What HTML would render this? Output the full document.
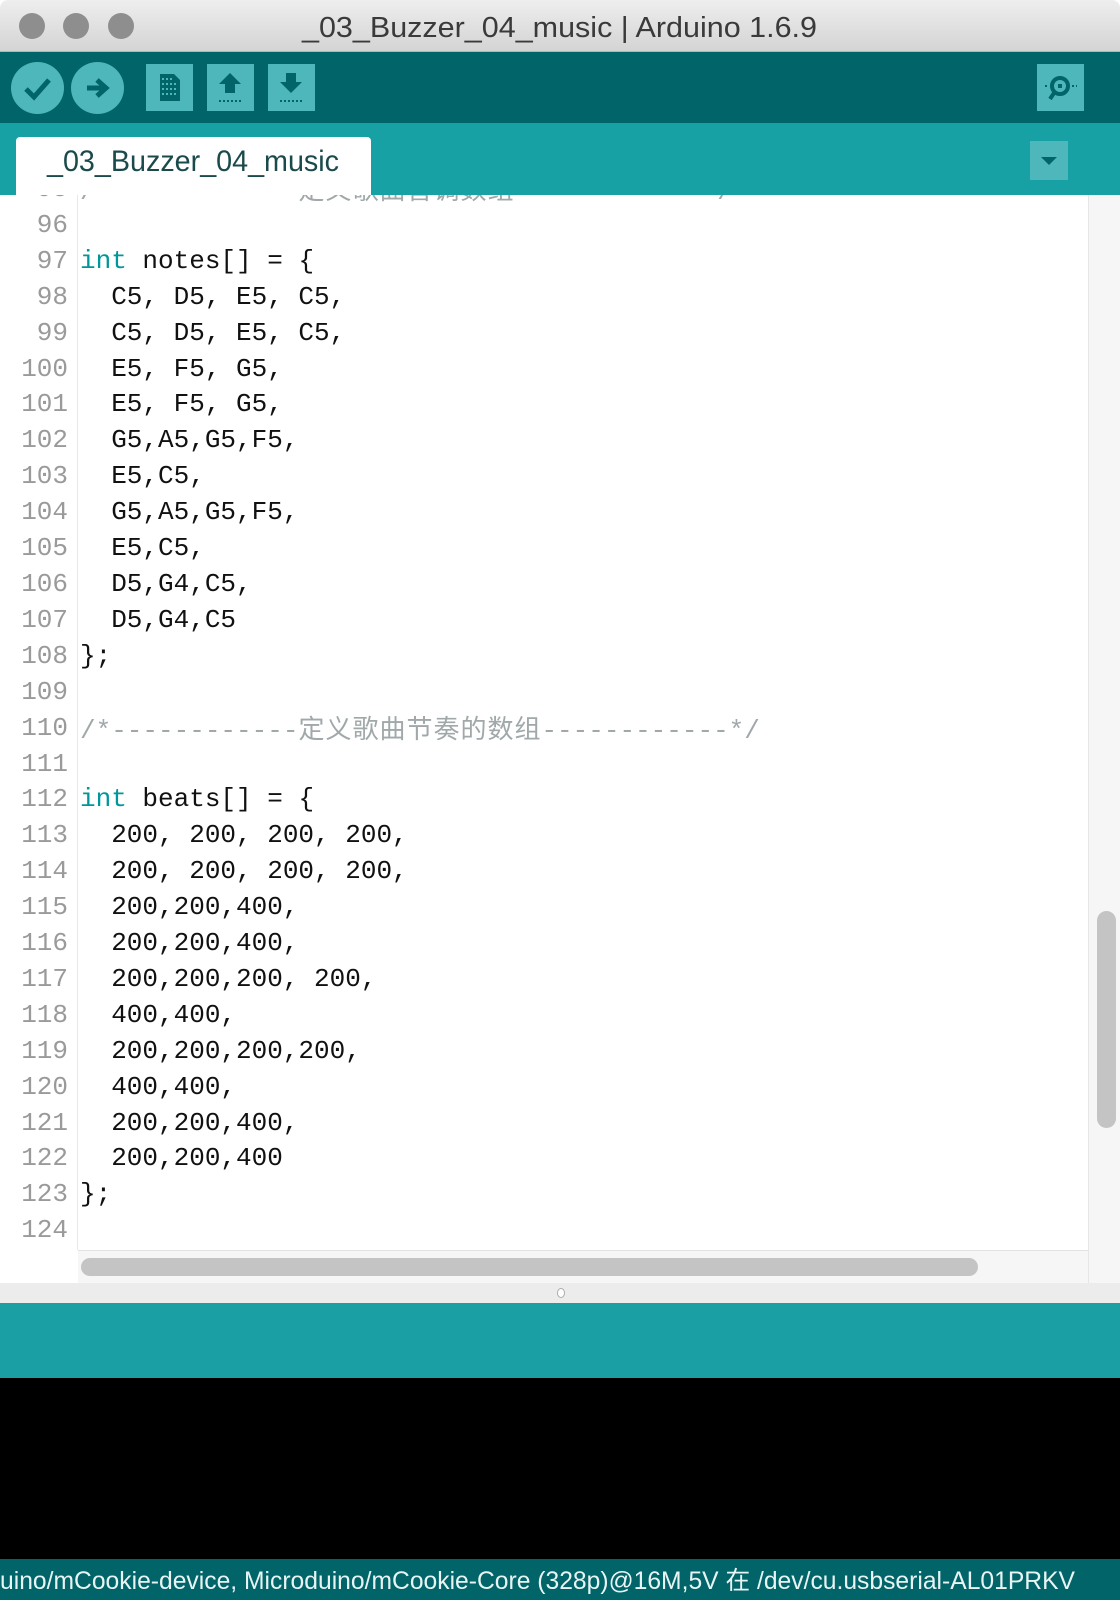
<!DOCTYPE html>
<html><head><meta charset="utf-8"><style>
*{margin:0;padding:0;box-sizing:border-box}
body{width:1120px;height:1600px;overflow:hidden;background:#fff;position:relative;font-family:"Liberation Sans",sans-serif}
.abs{position:absolute}
#title{left:0;top:0;width:1120px;height:52px;background:linear-gradient(#eeeeee,#d4d4d4);border-bottom:1px solid #b5b5b5;border-radius:8px 8px 0 0}
.dot{position:absolute;top:13px;width:26px;height:26px;border-radius:50%;background:#8e8e8e}
#tb{left:0;top:52px;width:1120px;height:71px;background:#006468}
.cb{position:absolute;top:62px;width:53px;height:52px;border-radius:50%;background:#4db7bb}
.sq{position:absolute;top:64px;width:47px;height:47px;background:#4db7bb}
#tabbar{left:0;top:123px;width:1120px;height:72px;background:#17a1a5}
#tab{left:16px;top:137px;width:355px;height:58px;background:#fff;border-radius:4px 4px 0 0}
#editor{left:0;top:195px;width:1120px;height:1088px;background:#fff;overflow:hidden}
.ln{position:absolute;left:0;width:68px;text-align:right;color:#9a9a9a;font:26px/36px "Liberation Mono",monospace;white-space:pre}
.cd{position:absolute;left:80px;color:#111;font:26px/36px "Liberation Mono",monospace;white-space:pre}
.kw{color:#00979c}
.cm{color:#a0a8aa}
.cj{font-family:"Noto Sans CJK SC",sans-serif;letter-spacing:1px}
</style></head><body>
<div id="title" class="abs">
<div class="dot" style="left:19px"></div><div class="dot" style="left:63px"></div><div class="dot" style="left:108px"></div>
<svg class="abs" style="left:0;top:0" width="1120" height="52"><text x="302" y="37" font-family="Liberation Sans" font-size="29" fill="#3a3a3a" textLength="515" lengthAdjust="spacingAndGlyphs">_03_Buzzer_04_music | Arduino 1.6.9</text></svg>
</div>
<div id="tb" class="abs"></div>
<div class="cb" style="left:11px"><svg width="53" height="52"><path d="M15 27 L23 35 L38 18" stroke="#006468" stroke-width="5" fill="none"/></svg></div>
<div class="cb" style="left:71px"><svg width="55" height="52"><path d="M16 26 H32 M26 18 L35 26 L26 34" stroke="#006468" stroke-width="5" fill="none"/></svg></div>
<div class="sq" style="left:146px"><svg width="47" height="47"><path d="M14 10 H28 L34 16 V37 H14 Z" fill="#006468"/><g fill="#4db7bb"><rect x="16" y="14" width="2" height="2"/><rect x="20" y="14" width="2" height="2"/><rect x="24" y="14" width="2" height="2"/><rect x="16" y="19" width="2" height="2"/><rect x="20" y="19" width="2" height="2"/><rect x="24" y="19" width="2" height="2"/><rect x="28" y="19" width="2" height="2"/><rect x="16" y="24" width="2" height="2"/><rect x="20" y="24" width="2" height="2"/><rect x="24" y="24" width="2" height="2"/><rect x="28" y="24" width="2" height="2"/><rect x="16" y="29" width="2" height="2"/><rect x="20" y="29" width="2" height="2"/><rect x="24" y="29" width="2" height="2"/><rect x="28" y="29" width="2" height="2"/></g></svg></div>
<div class="sq" style="left:207px"><svg width="47" height="47"><path d="M23 9 L34 20 H28 V29 H18 V20 H12 Z" fill="#006468"/><path d="M12 37 H35" stroke="#006468" stroke-width="2" stroke-dasharray="2 2"/></svg></div>
<div class="sq" style="left:268px"><svg width="47" height="47"><path d="M18 9 H28 V18 H34 L23 29 L12 18 H18 Z" fill="#006468"/><path d="M12 37 H35" stroke="#006468" stroke-width="2" stroke-dasharray="2 2"/></svg></div>
<div class="sq" style="left:1037px"><svg width="47" height="47"><circle cx="23" cy="22" r="8" fill="none" stroke="#006468" stroke-width="4"/><rect x="21" y="20" width="4" height="4" fill="#006468"/><path d="M17 29 L13 35" stroke="#006468" stroke-width="4"/><path d="M8 22 H11 M35 22 H40" stroke="#006468" stroke-width="2" stroke-dasharray="2 2"/></svg></div>
<div id="tabbar" class="abs"></div>
<div id="tab" class="abs"><svg width="355" height="58"><text x="31" y="34" font-family="Liberation Sans" font-size="30" fill="#1a4a4c" textLength="292" lengthAdjust="spacingAndGlyphs">_03_Buzzer_04_music</text></svg></div>
<div class="abs" style="left:1030px;top:141px;width:38px;height:39px;background:#4db7bb"><svg width="38" height="39"><path d="M11 16 H27 L19 24 Z" fill="#006468"/></svg></div>

<div id="editor" class="abs">
<div class="abs" style="left:77px;top:0;width:1px;height:1055px;background:#e8e8e8"></div>
<div class="abs" style="left:1088px;top:0;width:32px;height:1088px;background:#f6f6f6;border-left:1px solid #e6e6e6"></div>
<div class="abs" style="left:1097px;top:716px;width:19px;height:217px;border-radius:10px;background:#c4c4c4"></div>
<div class="abs" style="left:78px;top:1055px;width:1010px;height:33px;background:#f6f6f6;border-top:1px solid #e2e2e2"></div>
<div class="abs" style="left:81px;top:1063px;width:897px;height:18px;border-radius:9px;background:#c4c4c4"></div>
<div class="ln" style="top:-24px">95</div><div class="cd cm" style="top:-24px">/*------------<span class="cj">定义歌曲音调数组</span>------------*/</div>
<div class="ln" style="top:12px">96</div>
<div class="ln" style="top:48px">97</div><div class="cd" style="top:48px"><span class="kw">int</span> notes[] = {</div>
<div class="ln" style="top:84px">98</div><div class="cd" style="top:84px">  C5, D5, E5, C5,</div>
<div class="ln" style="top:120px">99</div><div class="cd" style="top:120px">  C5, D5, E5, C5,</div>
<div class="ln" style="top:156px">100</div><div class="cd" style="top:156px">  E5, F5, G5,</div>
<div class="ln" style="top:191px">101</div><div class="cd" style="top:191px">  E5, F5, G5,</div>
<div class="ln" style="top:227px">102</div><div class="cd" style="top:227px">  G5,A5,G5,F5,</div>
<div class="ln" style="top:263px">103</div><div class="cd" style="top:263px">  E5,C5,</div>
<div class="ln" style="top:299px">104</div><div class="cd" style="top:299px">  G5,A5,G5,F5,</div>
<div class="ln" style="top:335px">105</div><div class="cd" style="top:335px">  E5,C5,</div>
<div class="ln" style="top:371px">106</div><div class="cd" style="top:371px">  D5,G4,C5,</div>
<div class="ln" style="top:407px">107</div><div class="cd" style="top:407px">  D5,G4,C5</div>
<div class="ln" style="top:443px">108</div><div class="cd" style="top:443px">};</div>
<div class="ln" style="top:479px">109</div>
<div class="ln" style="top:515px">110</div><div class="cd cm" style="top:515px">/*------------<span class="cj">定义歌曲节奏的数组</span>------------*/</div>
<div class="ln" style="top:551px">111</div>
<div class="ln" style="top:586px">112</div><div class="cd" style="top:586px"><span class="kw">int</span> beats[] = {</div>
<div class="ln" style="top:622px">113</div><div class="cd" style="top:622px">  200, 200, 200, 200,</div>
<div class="ln" style="top:658px">114</div><div class="cd" style="top:658px">  200, 200, 200, 200,</div>
<div class="ln" style="top:694px">115</div><div class="cd" style="top:694px">  200,200,400,</div>
<div class="ln" style="top:730px">116</div><div class="cd" style="top:730px">  200,200,400,</div>
<div class="ln" style="top:766px">117</div><div class="cd" style="top:766px">  200,200,200, 200,</div>
<div class="ln" style="top:802px">118</div><div class="cd" style="top:802px">  400,400,</div>
<div class="ln" style="top:838px">119</div><div class="cd" style="top:838px">  200,200,200,200,</div>
<div class="ln" style="top:874px">120</div><div class="cd" style="top:874px">  400,400,</div>
<div class="ln" style="top:910px">121</div><div class="cd" style="top:910px">  200,200,400,</div>
<div class="ln" style="top:945px">122</div><div class="cd" style="top:945px">  200,200,400</div>
<div class="ln" style="top:981px">123</div><div class="cd" style="top:981px">};</div>
<div class="ln" style="top:1017px">124</div>
</div>
<div class="abs" style="left:0;top:1283px;width:1120px;height:20px;background:#ececec"><div class="abs" style="left:557px;top:5px;width:8px;height:10px;border:1px solid #aaa;border-radius:50%;background:#fff"></div></div>
<div class="abs" style="left:0;top:1303px;width:1120px;height:75px;background:#1aa0a4"></div>
<div class="abs" style="left:0;top:1378px;width:1120px;height:181px;background:#000"></div>
<div class="abs" style="left:0;top:1559px;width:1120px;height:41px;background:#006468"><svg width="1120" height="41"><text x="0" y="30" font-family="Liberation Sans" font-size="25" fill="#e8f4f4" textLength="1075" lengthAdjust="spacingAndGlyphs">uino/mCookie-device, Microduino/mCookie-Core (328p)@16M,5V 在 /dev/cu.usbserial-AL01PRKV</text></svg></div>
</body></html>
